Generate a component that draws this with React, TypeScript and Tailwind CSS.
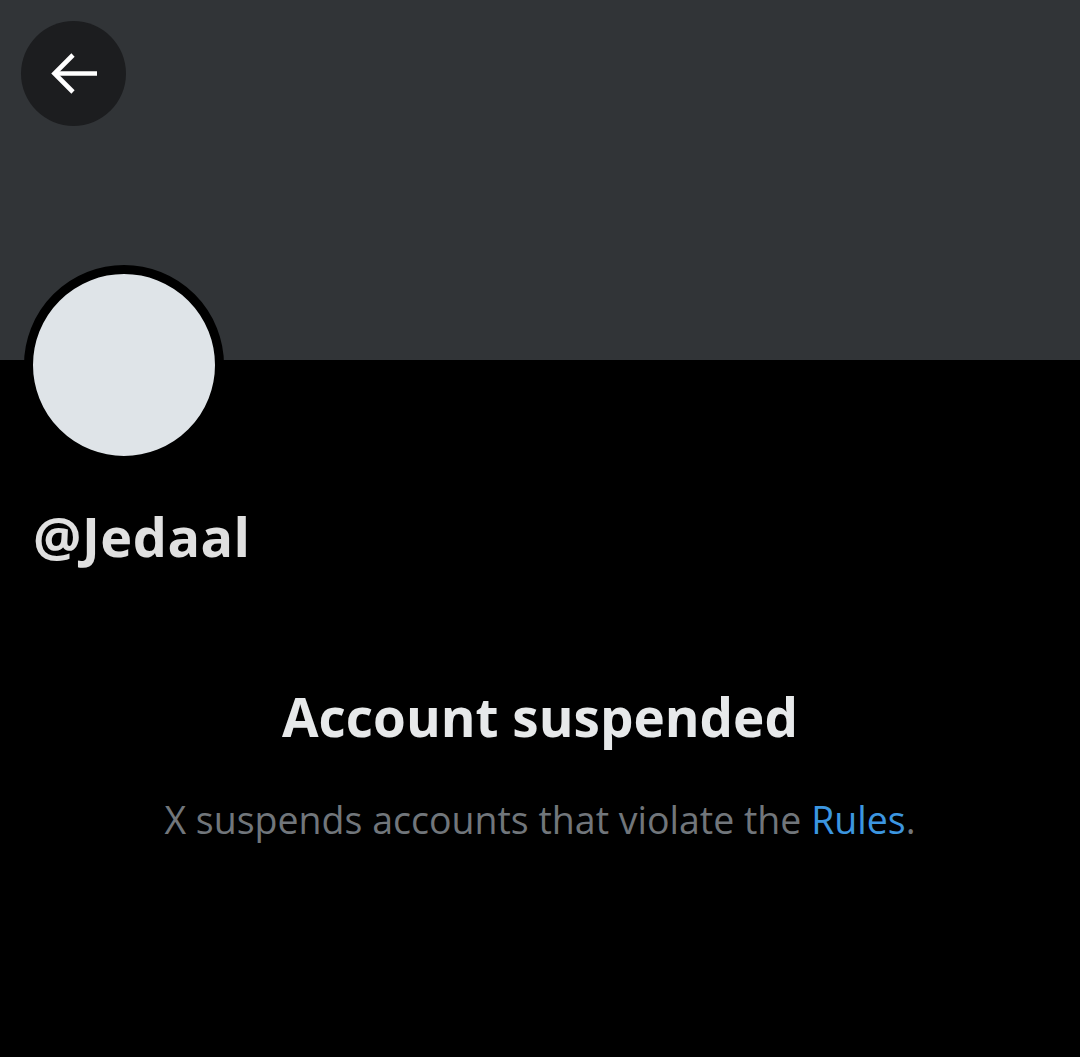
export default function App() {
  return (
    <div className="min-h-[1057px] w-[1080px] bg-black font-['Open_Sans',sans-serif]">
      <div className="h-[360px] bg-[#313437] pt-[21px] pl-[21px]">
        <button className="flex h-[105px] w-[105px] items-center justify-center rounded-full bg-[#1c1d1f]">
          <svg width="105" height="105" viewBox="0 0 105 105" fill="none" stroke="white" strokeWidth="4.6">
            <path d="M33 52.5H76" />
            <path d="M52 34L33.5 52.5L52 71" strokeLinejoin="miter" />
          </svg>
        </button>
      </div>

      <div className="px-[24px]">
        <div className="-mt-[95px] h-[200px] w-[200px] rounded-full border-[9px] border-black bg-[#dfe4e8]" />
        <h1 className="mt-[43px] pl-[9px] text-[54px] font-bold leading-[56px] tracking-[0.5px] text-[#e0e0e0]">@Jedaal</h1>
      </div>

      <div className="mt-[121px] flex flex-col items-center">
        <h2 className="text-[53px] font-bold leading-[64px] text-[#e7e9ea]">Account suspended</h2>
        <p className="mt-[49px] text-[37.5px] leading-[44px] text-[#71767b]">
          X suspends accounts that violate the <span className="text-[#3c96e0]">Rules</span>.
        </p>
      </div>
    </div>
  );
}
